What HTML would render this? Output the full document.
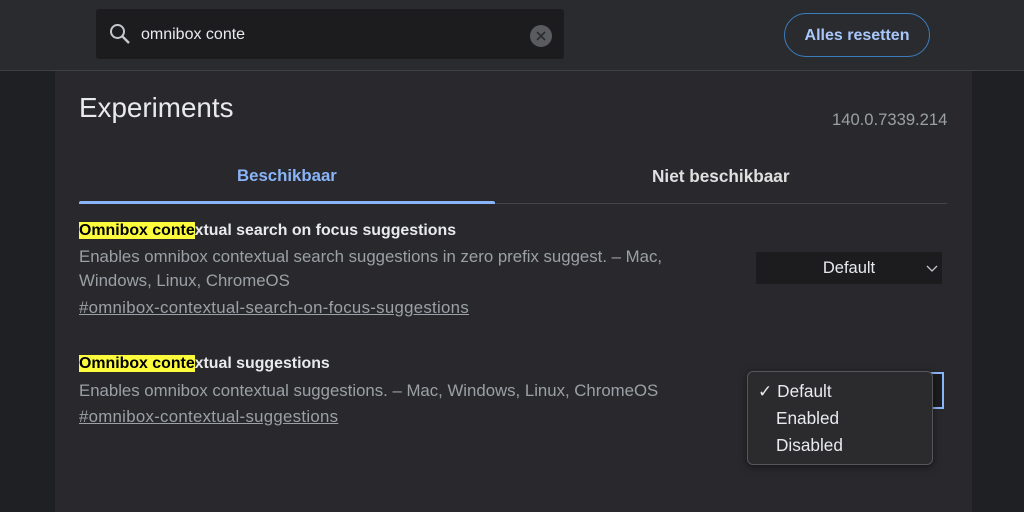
<!DOCTYPE html>
<html><head><style>
body{margin:0;width:1024px;height:512px;overflow:hidden;background:#1f2023;font-family:"Liberation Sans",sans-serif;position:relative}
.hdr{position:absolute;left:0;top:0;width:1024px;height:70px;background:#2a2b2f;border-bottom:1px solid #3f4044}
.search{position:absolute;left:96px;top:9px;width:468px;height:50px;background:#1c1c1f;border-radius:3px}
.search .t{position:absolute;left:45px;top:17px;color:#e8eaed;font-size:16px}
.clr{position:absolute;left:530px;top:24px;width:22px;height:22px;border-radius:50%;background:#5a5b5e}
.btn{position:absolute;left:784px;top:13px;width:144px;height:42px;border:1px solid #3b7dbd;border-radius:22px;color:#a8c7fa;font-size:16px;font-weight:bold;text-align:center;line-height:44px}
.panel{position:absolute;left:55px;top:71px;width:917px;height:441px;background:#29292d}
.abs{position:absolute;white-space:nowrap}
.ttl{font-size:15.9px;color:#e8eaed;font-weight:bold}
.hl{background:#fcfc3c;color:#000;font-weight:bold}
.desc{font-size:16.8px;color:#9aa0a6;line-height:24px}
.lnk{font-size:16.8px;letter-spacing:0.3px;color:#9aa0a6;text-decoration:underline}
.sel{position:absolute;background:#1c1c1f;color:#e8eaed;font-size:16.5px;text-align:center}
.opt{font-size:17.2px;color:#e8eaed}
</style></head><body>
<div class="hdr">
 <div class="search">
  <svg style="position:absolute;left:13px;top:14px" width="22" height="22" viewBox="0 0 22 22"><circle cx="8.5" cy="8.5" r="6.5" fill="none" stroke="#c4c7cc" stroke-width="2"/><line x1="13.5" y1="13.5" x2="20" y2="20" stroke="#c4c7cc" stroke-width="2.4"/></svg>
  <div class="t">omnibox conte</div>
 </div>
 <div class="clr" style="left:530px;top:25px"><svg width="22" height="22"><path d="M7 7L15 15M15 7L7 15" stroke="#2a2b2f" stroke-width="1.6"/></svg></div>
 <div class="btn">Alles resetten</div>
</div>
<div class="panel"></div>
<div class="abs" style="left:79px;top:92px;font-size:27.8px;color:#e8eaed">Experiments</div>
<div class="abs" style="left:832px;top:110px;font-size:16.6px;color:#9aa0a6">140.0.7339.214</div>
<div class="abs" style="left:237px;top:166px;font-size:16.8px;color:#8ab4f8;font-weight:bold">Beschikbaar</div>
<div class="abs" style="left:652px;top:166px;font-size:17.2px;color:#e0e0e0;font-weight:bold">Niet beschikbaar</div>
<div class="abs" style="left:79px;top:203px;width:868px;height:1px;background:#444548"></div>
<div class="abs" style="left:79px;top:201px;width:416px;height:3px;background:#8ab4f8;border-radius:2px 2px 0 0"></div>
<div class="abs ttl" style="left:79px;top:222px"><span class="hl">Omnibox conte</span>xtual search on focus suggestions</div>
<div class="abs desc" style="left:79px;top:245px">Enables omnibox contextual search suggestions in zero prefix suggest. – Mac,<br>Windows, Linux, ChromeOS</div>
<div class="abs lnk" style="left:79px;top:298px">#omnibox-contextual-search-on-focus-suggestions</div>
<div class="sel" style="left:756px;top:252px;width:186px;height:32px;line-height:32px">Default<svg style="position:absolute;right:4px;top:11px" width="12" height="10"><path d="M1 3L6 8L11 3" fill="none" stroke="#c4c7cc" stroke-width="1.3"/></svg></div>
<div class="abs ttl" style="left:79px;top:355px"><span class="hl">Omnibox conte</span>xtual suggestions</div>
<div class="abs desc" style="left:79px;top:379px">Enables omnibox contextual suggestions. – Mac, Windows, Linux, ChromeOS</div>
<div class="abs lnk" style="left:79px;top:407px">#omnibox-contextual-suggestions</div>
<div class="abs" style="left:756px;top:372px;width:188px;height:37px;background:#1c1c1f;border:2px solid #8ab4f8;box-sizing:border-box"></div>
<div class="abs" style="left:747px;top:371px;width:184px;height:92px;background:#2b2b2e;border:1px solid #55565a;border-radius:6px;box-shadow:0 2px 8px rgba(0,0,0,.5)"></div>
<div class="abs opt" style="left:758px;top:381px">✓ Default</div>
<div class="abs opt" style="left:776px;top:408px">Enabled</div>
<div class="abs opt" style="left:776px;top:435px">Disabled</div>
</body></html>
